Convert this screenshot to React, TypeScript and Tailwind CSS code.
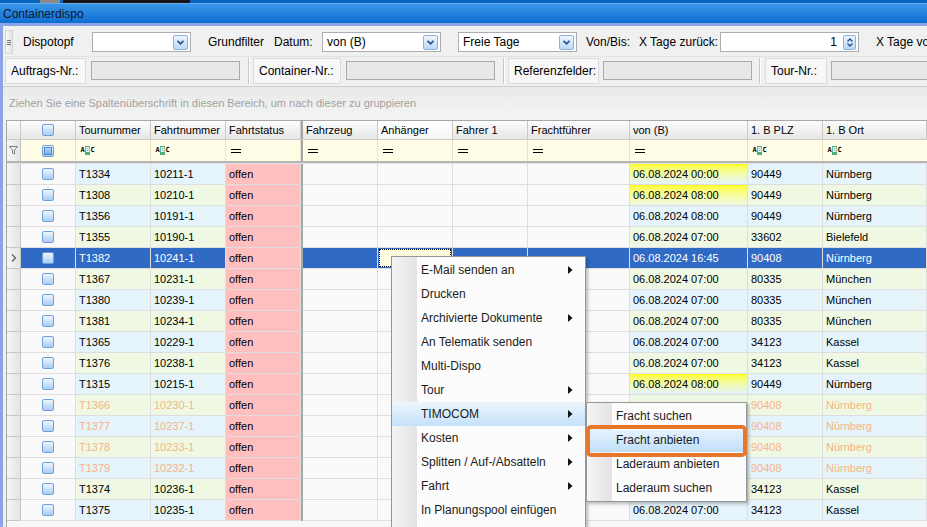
import React from "react";

type RowData = {
  t: string;
  f: string;
  von: string;
  yellow?: boolean;
  plz: string;
  ort: string;
  faded?: boolean;
  sel?: boolean;
};

const rows: RowData[] = [
  { t: "T1334", f: "10211-1", von: "06.08.2024 00:00", yellow: true, plz: "90449", ort: "Nürnberg" },
  { t: "T1308", f: "10210-1", von: "06.08.2024 08:00", yellow: true, plz: "90449", ort: "Nürnberg" },
  { t: "T1356", f: "10191-1", von: "06.08.2024 08:00", plz: "90449", ort: "Nürnberg" },
  { t: "T1355", f: "10190-1", von: "06.08.2024 07:00", plz: "33602", ort: "Bielefeld" },
  { t: "T1382", f: "10241-1", von: "06.08.2024 16:45", plz: "90408", ort: "Nürnberg", sel: true },
  { t: "T1367", f: "10231-1", von: "06.08.2024 07:00", plz: "80335", ort: "München" },
  { t: "T1380", f: "10239-1", von: "06.08.2024 07:00", plz: "80335", ort: "München" },
  { t: "T1381", f: "10234-1", von: "06.08.2024 07:00", plz: "80335", ort: "München" },
  { t: "T1365", f: "10229-1", von: "06.08.2024 07:00", plz: "34123", ort: "Kassel" },
  { t: "T1376", f: "10238-1", von: "06.08.2024 07:00", plz: "34123", ort: "Kassel" },
  { t: "T1315", f: "10215-1", von: "06.08.2024 08:00", yellow: true, plz: "90449", ort: "Nürnberg" },
  { t: "T1366", f: "10230-1", von: "", plz: "90408", ort: "Nürnberg", faded: true },
  { t: "T1377", f: "10237-1", von: "", plz: "90408", ort: "Nürnberg", faded: true },
  { t: "T1378", f: "10233-1", von: "", plz: "90408", ort: "Nürnberg", faded: true },
  { t: "T1379", f: "10232-1", von: "", plz: "90408", ort: "Nürnberg", faded: true },
  { t: "T1374", f: "10236-1", von: "", plz: "34123", ort: "Kassel" },
  { t: "T1375", f: "10235-1", von: "06.08.2024 07:00", plz: "34123", ort: "Kassel" },
];

function Check({ filter }: { filter?: boolean }) {
  return (
    <div className="w-[12px] h-[12px] rounded-[2px] border border-[#6f9fd8] bg-linear-to-b from-[#eef6fe] to-[#a9cdf2] flex items-center justify-center">
      {filter && <div className="w-[8px] h-[8px] border border-[#4f86cf] bg-linear-to-b from-[#bcd8f6] to-[#7aaee8]" />}
    </div>
  );
}

function Combo({ w, text }: { w: string; text?: string }) {
  return (
    <div className={`${w} shrink-0 h-[20px] bg-white border border-[#abadb3] flex items-center justify-between pl-[4px] pr-[2px]`}>
      <span className="text-[12px] text-black">{text}</span>
      <div className="w-[15px] h-[15px] rounded-[2px] border border-[#8db2dc] bg-linear-to-b from-[#eef6fe] to-[#bcdaf6] flex items-center justify-center">
        <svg width="7" height="5" viewBox="0 0 7 5">
          <path d="M0.5 0.8 L3.5 3.8 L6.5 0.8" fill="none" stroke="#1f4f8f" strokeWidth="1.6" />
        </svg>
      </div>
    </div>
  );
}

function LabelBox({ w, text }: { w: string; text: string }) {
  return (
    <div className={`${w} h-[26px] shrink-0 border border-[#dcdcdc] bg-[#f7f7f7] flex items-center pl-[5px] text-[12px] text-black`}>
      {text}
    </div>
  );
}

function TextBox({ w }: { w: string }) {
  return <div className={`${w} h-[19px] shrink-0 border border-[#a9a9a9] bg-[#e8e8e8]`} />;
}

function Sep() {
  return <div className="w-[2px] h-[26px] border-l border-[#c8c8c8] bg-white shrink-0" />;
}

function Abc() {
  return (
    <div className="flex items-center h-[10px] font-['DejaVu_Sans_Mono',monospace] text-[7px] font-bold leading-none text-black">
      <span className="w-[5px] text-center">A</span>
      <span className="w-[5px] h-[9px] bg-[#4fae82] text-white flex items-center justify-center">B</span>
      <span className="w-[5px] text-center">C</span>
    </div>
  );
}

function Eq() {
  return <div className="w-[10px] h-[4px] border-y-[1.5px] border-black ml-[5px]" />;
}

function Arrow() {
  return (
    <svg width="5" height="8" viewBox="0 0 5 8" className="absolute right-[12px] top-[8px]">
      <path d="M0 0 L4.5 4 L0 8 Z" fill="#111" />
    </svg>
  );
}

const W = {
  ind: "w-[14px]",
  chk: "w-[55px]",
  tour: "w-[75px]",
  fnr: "w-[75px]",
  stat: "w-[75px]",
  fz: "w-[75px]",
  anh: "w-[75px]",
  fah: "w-[75px]",
  fra: "w-[102px]",
  von: "w-[118px]",
  plz: "w-[75px]",
};

function HeaderCell({ w, text, hot }: { w: string; text?: string; hot?: boolean }) {
  return (
    <div
      className={`${w} shrink-0 h-full border-r border-[#c9c9c9] ${
        hot ? "bg-linear-to-b from-[#ffffff] to-[#f6f6f6]" : "bg-linear-to-b from-[#fcfcfc] to-[#e6e6e6]"
      } flex items-center pl-[3px] text-[11px] text-black`}
    >
      {text}
    </div>
  );
}

function DataRow({ r, i }: { r: RowData; i: number }) {
  const even = i % 2 === 1;
  const bg = r.sel ? "bg-[#316ac5]" : even ? "bg-[#eff8e3]" : "bg-[#e5f3fb]";
  const txt = r.sel ? "text-white" : r.faded ? "text-[#f7b488]" : "text-black";
  const blank = r.sel ? "bg-[#316ac5]" : "bg-[#fafafa]";
  const cell = "shrink-0 h-full border-r border-b border-[#dedede] flex items-center pl-[3px] pt-px text-[11px]";
  return (
    <div className="flex h-[21px]">
      <div className={`${W.ind} shrink-0 h-full border-r border-b border-[#c6c6c6] bg-linear-to-r from-[#f6f6f6] to-[#e4e4e4] flex items-center justify-center`}>
        {r.sel && (
          <svg width="6" height="8" viewBox="0 0 6 8">
            <path d="M1 0.5 L4.5 4 L1 7.5" fill="none" stroke="#666" strokeWidth="1.4" />
          </svg>
        )}
      </div>
      <div className={`${W.chk} shrink-0 h-full border-r border-b border-[#dedede] flex items-center justify-center ${r.sel ? "bg-[#316ac5]" : "bg-[#fafafa]"}`}>
        <Check />
      </div>
      <div className={`${W.tour} ${cell} ${bg} ${txt}`}>{r.t}</div>
      <div className={`${W.fnr} ${cell} ${bg} ${txt}`}>{r.f}</div>
      <div className={`${W.stat} ${cell} bg-[#ffbfbf] text-black`}>offen</div>
      <div className="w-[2px] shrink-0 h-full bg-[#a6a6a6]" />
      <div className={`${W.fz} ${cell} ${blank}`} />
      {r.sel ? (
        <div className={`${W.anh} shrink-0 h-full border-r border-b border-[#dedede] p-px bg-[#316ac5]`}>
          <div className="w-full h-full border border-dotted border-black bg-[#fffde2]" />
        </div>
      ) : (
        <div className={`${W.anh} ${cell} ${blank}`} />
      )}
      <div className={`${W.fah} ${cell} ${blank}`} />
      <div className={`${W.fra} ${cell} ${blank}`} />
      <div
        className={`${W.von} ${cell} ${
          r.sel ? bg : r.yellow ? (even ? "bg-linear-to-b from-[#ffff00] to-[#eff8e3]" : "bg-linear-to-b from-[#ffff00] to-[#e5f3fb]") : bg
        } ${r.sel ? "text-white" : "text-black"}`}
      >
        {r.von}
      </div>
      <div className={`${W.plz} ${cell} ${bg} ${txt}`}>{r.plz}</div>
      <div className={`flex-1 ${cell} ${bg} ${txt}`}>{r.ort}</div>
    </div>
  );
}

export default function App() {
  const menuItems: { label: string; arrow?: boolean; hl?: boolean }[] = [
    { label: "E-Mail senden an", arrow: true },
    { label: "Drucken" },
    { label: "Archivierte Dokumente", arrow: true },
    { label: "An Telematik senden" },
    { label: "Multi-Dispo" },
    { label: "Tour", arrow: true },
    { label: "TIMOCOM", arrow: true, hl: true },
    { label: "Kosten", arrow: true },
    { label: "Splitten / Auf-/Absatteln", arrow: true },
    { label: "Fahrt", arrow: true },
    { label: "In Planungspool einfügen" },
  ];
  const subItems = [
    { label: "Fracht suchen" },
    { label: "Fracht anbieten", hl: true },
    { label: "Laderaum anbieten" },
    { label: "Laderaum suchen" },
  ];

  return (
    <div className="relative w-[927px] h-[527px] overflow-hidden bg-[#f0f0f0] font-['Liberation_Sans',Arial,sans-serif] flex flex-col">
      {/* top strip */}
      <div className="h-[3px] shrink-0 bg-[#0b63c0] flex">
        <div className="w-[40px]" />
        <div className="w-[20px] bg-[#8a8a8a]" />
        <div className="w-[3px]" />
        <div className="w-[127px] bg-[#151515]" />
      </div>
      {/* title */}
      <div className="h-[20px] shrink-0 bg-linear-to-b from-[#3896e8] to-[#0b6ed3] border-t border-[#63adf0] flex items-center pl-[3px]">
        <span className="text-[12px] text-[#0a1730]">Containerdispo</span>
      </div>
      <div className="h-[3px] shrink-0 bg-[#8ba4e8]" />

      <div className="flex flex-1 min-h-0">
        <div className="w-[3px] shrink-0 bg-[#8ba4e8]" />
        <div className="flex-1 flex flex-col min-w-0 overflow-hidden">
          {/* toolbar row 1 */}
          <div className="h-[30px] shrink-0 pt-[2px] flex items-center text-[12px] text-black whitespace-nowrap overflow-hidden">
            <div className="ml-[2px] shrink-0 w-[8px] h-[24px] bg-linear-to-r from-[#fafafa] to-[#e2e2e2] border border-[#d4d4d4] flex flex-col items-center justify-center gap-[1px]">
              <div className="w-[4px] h-px bg-[#777]" />
              <div className="w-[4px] h-px bg-[#777]" />
              <div className="w-[4px] h-px bg-[#777]" />
            </div>
            <div className="ml-[10px] w-[69px] shrink-0">Dispotopf</div>
            <Combo w="w-[99px]" />
            <div className="ml-[17px] w-[66px] shrink-0">Grundfilter</div>
            <div className="w-[48px] shrink-0">Datum:</div>
            <Combo w="w-[119px]" text="von (B)" />
            <div className="ml-[17px] shrink-0">
              <Combo w="w-[119px]" text="Freie Tage" />
            </div>
            <div className="ml-[9px] w-[53px] shrink-0">Von/Bis:</div>
            <div className="w-[81px] shrink-0">X Tage zurück:</div>
            <div className="w-[139px] h-[20px] bg-white border border-[#abadb3] flex items-center justify-end pr-[2px] shrink-0">
              <span className="mr-[6px]">1</span>
              <div className="w-[13px] h-[15px] rounded-[2px] border border-[#8db2dc] bg-linear-to-b from-[#eef6fe] to-[#bcdaf6] flex flex-col items-center justify-center gap-[1px]">
                <svg width="6" height="4" viewBox="0 0 6 4"><path d="M0.5 3.5 L3 1 L5.5 3.5" fill="none" stroke="#1f4f8f" strokeWidth="1.3" /></svg>
                <svg width="6" height="4" viewBox="0 0 6 4"><path d="M0.5 0.5 L3 3 L5.5 0.5" fill="none" stroke="#1f4f8f" strokeWidth="1.3" /></svg>
              </div>
            </div>
            <div className="ml-[17px] shrink-0">X Tage vor:</div>
          </div>
          {/* toolbar row 2 */}
          <div className="h-[28px] shrink-0 flex items-center whitespace-nowrap border-t border-[#e2e2e2] overflow-hidden">
            <div className="ml-[2px] shrink-0" />
            <LabelBox w="w-[81px]" text="Auftrags-Nr.:" />
            <div className="ml-[5px] shrink-0" />
            <TextBox w="w-[149px]" />
            <div className="ml-[8px] shrink-0" />
            <Sep />
            <div className="ml-[3px] shrink-0" />
            <LabelBox w="w-[88px]" text="Container-Nr.:" />
            <div className="ml-[5px] shrink-0" />
            <TextBox w="w-[149px]" />
            <div className="ml-[8px] shrink-0" />
            <Sep />
            <div className="ml-[3px] shrink-0" />
            <LabelBox w="w-[91px]" text="Referenzfelder:" />
            <div className="ml-[4px] shrink-0" />
            <TextBox w="w-[149px]" />
            <div className="ml-[7px] shrink-0" />
            <Sep />
            <div className="ml-[4px] shrink-0" />
            <LabelBox w="w-[62px]" text="Tour-Nr.:" />
            <div className="ml-[4px] shrink-0" />
            <TextBox w="w-[149px]" />
          </div>
          {/* group panel */}
          <div className="mt-[2px] h-[33px] shrink-0 border-t border-[#d0d0d0] bg-linear-to-b from-[#e9e9e9] to-[#f4f4f4] flex items-center pl-[6px] pt-px text-[11px] text-[#a2a2a2] whitespace-nowrap">
            Ziehen Sie eine Spaltenüberschrift in diesen Bereich, um nach dieser zu gruppieren
          </div>
          {/* grid */}
          <div className="mt-[1px] ml-[3px] flex-1 flex flex-col bg-[#f7f7f7] border-l border-t border-[#a8a8a8] whitespace-nowrap">
            {/* header */}
            <div className="flex h-[19px] shrink-0 border-b border-[#c9c9c9]">
              <HeaderCell w={W.ind} />
              <div className={`${W.chk} shrink-0 h-full border-r border-[#c9c9c9] bg-linear-to-b from-[#fcfcfc] to-[#e6e6e6] flex items-center justify-center`}>
                <Check />
              </div>
              <HeaderCell w={W.tour} text="Tournummer" />
              <HeaderCell w={W.fnr} text="Fahrtnummer" />
              <HeaderCell w={W.stat} text="Fahrtstatus" />
              <div className="w-[2px] shrink-0 h-full bg-[#a6a6a6]" />
              <HeaderCell w={W.fz} text="Fahrzeug" />
              <HeaderCell w={W.anh} text="Anhänger" hot />
              <HeaderCell w={W.fah} text="Fahrer 1" />
              <HeaderCell w={W.fra} text="Frachtführer" />
              <HeaderCell w={W.von} text="von (B)" />
              <HeaderCell w={W.plz} text="1. B PLZ" />
              <HeaderCell w="flex-1" text="1. B Ort" />
            </div>
            {/* filter row */}
            <div className="flex h-[21px] shrink-0 bg-[#fffde5]">
              <div className={`${W.ind} shrink-0 h-full border-r border-[#c6c6c6] bg-linear-to-r from-[#f6f6f6] to-[#e4e4e4] flex items-center justify-center`}>
                <svg width="9" height="9" viewBox="0 0 9 9">
                  <path d="M0.5 0.5 H8.5 L5.5 4 V8 L3.5 7 V4 Z" fill="#f4f4f4" stroke="#7a7a7a" strokeWidth="1" />
                </svg>
              </div>
              <div className={`${W.chk} shrink-0 h-full border-r border-[#e6e3c8] flex items-center justify-center`}>
                <Check filter />
              </div>
              <div className={`${W.tour} shrink-0 h-full border-r border-[#e6e3c8] flex items-center pl-[4px]`}><Abc /></div>
              <div className={`${W.fnr} shrink-0 h-full border-r border-[#e6e3c8] flex items-center pl-[4px]`}><Abc /></div>
              <div className={`${W.stat} shrink-0 h-full border-r border-[#e6e3c8] flex items-center`}><Eq /></div>
              <div className="w-[2px] shrink-0 h-full bg-[#a6a6a6]" />
              <div className={`${W.fz} shrink-0 h-full border-r border-[#e6e3c8] flex items-center`}><Eq /></div>
              <div className={`${W.anh} shrink-0 h-full border-r border-[#e6e3c8] flex items-center`}><Eq /></div>
              <div className={`${W.fah} shrink-0 h-full border-r border-[#e6e3c8] flex items-center`}><Eq /></div>
              <div className={`${W.fra} shrink-0 h-full border-r border-[#e6e3c8] flex items-center`}><Eq /></div>
              <div className={`${W.von} shrink-0 h-full border-r border-[#e6e3c8] flex items-center`}><Eq /></div>
              <div className={`${W.plz} shrink-0 h-full border-r border-[#e6e3c8] flex items-center pl-[4px]`}><Abc /></div>
              <div className="flex-1 h-full flex items-center pl-[4px]"><Abc /></div>
            </div>
            <div className="h-[3px] shrink-0 border-t-2 border-[#b4b4b4] bg-[#e4e4e4]" />
            {rows.map((r, i) => (
              <DataRow key={r.t} r={r} i={i} />
            ))}
          </div>
        </div>
      </div>

      {/* context menu */}
      <div className="absolute left-[391px] top-[256px] w-[195px] h-[280px] bg-[#fcfcfc] border border-[#979797] shadow-[2px_2px_3px_rgba(0,0,0,0.25)] py-[1px] text-[12px] text-[#1b1b1b]">
        <div className="absolute left-0 top-0 bottom-0 w-[26px] bg-linear-to-r from-[#f4f4f4] to-[#e3e3e3] border-r border-white" />
        {menuItems.map((m) => (
          <div
            key={m.label}
            className={`relative h-[24px] flex items-center pl-[29px] ${
              m.hl ? "bg-linear-to-b from-[#edf6fe] to-[#c3e1fa]" : ""
            }`}
          >
            <span className="relative">{m.label}</span>
            {m.arrow && <Arrow />}
          </div>
        ))}
      </div>

      {/* submenu */}
      <div className="absolute left-[586px] top-[402px] w-[161px] h-[100px] bg-[#fcfcfc] border border-[#979797] shadow-[2px_2px_3px_rgba(0,0,0,0.25)] py-[1px] text-[12px] text-[#1b1b1b]">
        <div className="absolute left-0 top-0 bottom-0 w-[26px] bg-linear-to-r from-[#f4f4f4] to-[#e3e3e3] border-r border-white" />
        {subItems.map((m) => (
          <div key={m.label} className="relative h-[24px] flex items-center pl-[29px]">
            {m.hl && <div className="absolute left-[3px] right-[3px] top-[2px] bottom-0 bg-linear-to-b from-[#e6f2fd] to-[#bedffa]" />}
            <span className="relative">{m.label}</span>
          </div>
        ))}
      </div>
      <div className="absolute left-[586px] top-[425px] w-[161px] h-[32px] border-[4px] border-[#e8772b] rounded-[5px]" />
    </div>
  );
}
